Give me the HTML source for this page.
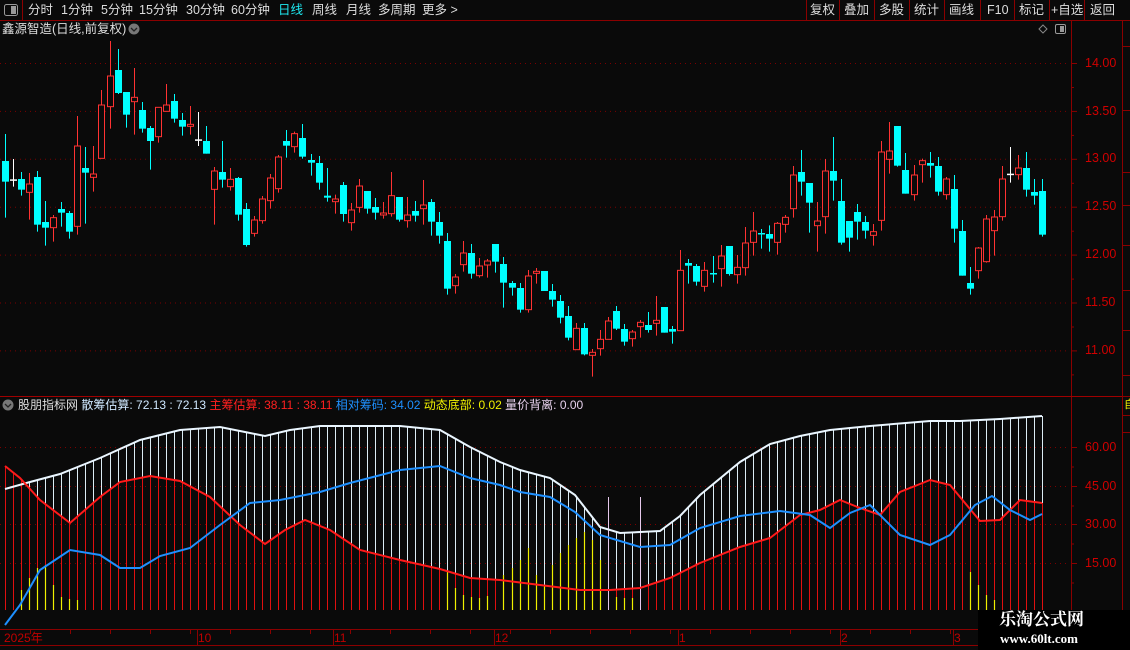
<!DOCTYPE html>
<html><head><meta charset="utf-8"><style>
html,body{margin:0;padding:0;background:#0a0a0a;width:1130px;height:650px;overflow:hidden;font-family:"Liberation Sans","Noto Sans CJK SC",sans-serif;}
#root{position:relative;width:1130px;height:650px;}
.t{position:absolute;white-space:nowrap;font-size:12.5px;line-height:14px;}
</style></head><body><div id="root">
<svg id="s" width="1130" height="650" style="position:absolute;left:0;top:0" xmlns="http://www.w3.org/2000/svg"></svg>
<div class="t" style="left:28px;top:3px;color:#ddd">分时</div>
<div class="t" style="left:61px;top:3px;color:#ddd">1分钟</div>
<div class="t" style="left:101px;top:3px;color:#ddd">5分钟</div>
<div class="t" style="left:139px;top:3px;color:#ddd">15分钟</div>
<div class="t" style="left:186px;top:3px;color:#ddd">30分钟</div>
<div class="t" style="left:231px;top:3px;color:#ddd">60分钟</div>
<div class="t" style="left:278px;top:3px;color:#1ee8f0">日线</div>
<div class="t" style="left:312px;top:3px;color:#ddd">周线</div>
<div class="t" style="left:346px;top:3px;color:#ddd">月线</div>
<div class="t" style="left:378px;top:3px;color:#ddd">多周期</div>
<div class="t" style="left:422px;top:3px;color:#ddd">更多 &gt;</div>
<div class="t" style="left:810px;top:3px;color:#ddd">复权</div>
<div class="t" style="left:844px;top:3px;color:#ddd">叠加</div>
<div class="t" style="left:879px;top:3px;color:#ddd">多股</div>
<div class="t" style="left:914px;top:3px;color:#ddd">统计</div>
<div class="t" style="left:949px;top:3px;color:#ddd">画线</div>
<div class="t" style="left:987px;top:3px;color:#ddd">F10</div>
<div class="t" style="left:1019px;top:3px;color:#ddd">标记</div>
<div class="t" style="left:1051px;top:3px;color:#ddd">+自选</div>
<div class="t" style="left:1090px;top:3px;color:#ddd">返回</div>
<div class="t" style="left:2px;top:22px;color:#ddd">鑫源智造(日线,前复权)</div>
<div class="t" style="left:18px;top:398px;font-size:12px">
<span style="color:#ddd">股朋指标网</span>
<span style="color:#cfe8ff">散筹估算: 72.13 : 72.13</span>
<span style="color:#ff2020">主筹估算: 38.11 : 38.11</span>
<span style="color:#1e90ff">相对筹码: 34.02</span>
<span style="color:#f0f000">动态底部: 0.02</span>
<span style="color:#e6d0ec">量价背离: 0.00</span></div>
<div class="t" style="left:1085px;top:56px;color:#d00000">14.00</div>
<div class="t" style="left:1085px;top:104px;color:#d00000">13.50</div>
<div class="t" style="left:1085px;top:151px;color:#d00000">13.00</div>
<div class="t" style="left:1085px;top:199px;color:#d00000">12.50</div>
<div class="t" style="left:1085px;top:247px;color:#d00000">12.00</div>
<div class="t" style="left:1085px;top:295px;color:#d00000">11.50</div>
<div class="t" style="left:1085px;top:343px;color:#d00000">11.00</div>
<div class="t" style="left:1085px;top:440px;color:#d00000">60.00</div>
<div class="t" style="left:1085px;top:479px;color:#d00000">45.00</div>
<div class="t" style="left:1085px;top:517px;color:#d00000">30.00</div>
<div class="t" style="left:1085px;top:556px;color:#d00000">15.00</div>
<div class="t" style="left:4px;top:631px;color:#c00000;font-size:12px">2025年</div>
<div class="t" style="left:198px;top:631px;color:#c00000;font-size:12px">10</div>
<div class="t" style="left:334px;top:631px;color:#c00000;font-size:12px">11</div>
<div class="t" style="left:495px;top:631px;color:#c00000;font-size:12px">12</div>
<div class="t" style="left:679px;top:631px;color:#c00000;font-size:12px">1</div>
<div class="t" style="left:841px;top:631px;color:#c00000;font-size:12px">2</div>
<div class="t" style="left:954px;top:631px;color:#c00000;font-size:12px">3</div>
<div style="position:absolute;left:978px;top:610px;width:152px;height:40px;background:#000"></div>
<div class="t" style="left:999px;top:610px;color:#fff;font-size:17px;line-height:20px;font-weight:bold;font-family:'Liberation Serif','Noto Serif CJK SC',serif">乐淘公式网</div>
<div class="t" style="left:1000px;top:632px;color:#fff;font-size:13px;font-weight:bold;font-family:'Liberation Serif',serif">www.60lt.com</div>
<div class="t" style="left:1124px;top:398px;color:#f0f000;font-size:11px">自</div>
</div>
<script>
var s=document.getElementById('s'),h='';
function R(x,y,w,hh,f){h+='<rect x="'+x+'" y="'+y+'" width="'+w+'" height="'+hh+'" fill="'+f+'"/>';}
function L(x1,y1,x2,y2,c,w,d){h+='<line x1="'+x1+'" y1="'+y1+'" x2="'+x2+'" y2="'+y2+'" stroke="'+c+'" stroke-width="'+(w||1)+'"'+(d?' stroke-dasharray="'+d+'"':'')+'/>';}
var B='#8b0000';
L(0,20.5,1130,20.5,B);L(22.5,0,22.5,20,B);
h+='<rect x="4.5" y="4.5" width="13" height="11" rx="2" fill="none" stroke="#999"/>';R(11,6,5,8,'#999');
[806,839,874,909,944,980,1014,1049,1084].forEach(function(x){L(x+.5,0,x+.5,20,B);});
L(1071.5,20,1071.5,630,B);L(1122.5,20,1122.5,630,B);
L(0,396.5,1122,396.5,'#a00000');L(0,629.5,1130,629.5,B);L(0,645.5,1130,645.5,B);
[20,46,110,172,205,245,290,330,375,396,415,432,628].forEach(function(y){L(1122,y+.5,1130,y+.5,B);});
h+='<circle cx="134" cy="29" r="5.5" fill="#777"/><path d="M131 28 l3 3 l3 -3" stroke="#222" fill="none" stroke-width="1.3"/>';
h+='<path d="M1043 25 l4 4 l-4 4 l-4 -4z" fill="none" stroke="#888"/>';
h+='<rect x="1055.5" y="24.5" width="10" height="9" rx="1.5" fill="none" stroke="#999"/>';R(1060,26,4,6,'#999');
h+='<circle cx="8" cy="405" r="5.5" fill="#777"/><path d="M5 404 l3 3 l3 -3" stroke="#222" fill="none" stroke-width="1.3"/>';
for(var p=0;p<7;p++){var y=63.5+p*47.9;L(0,y,1066,y,'#7a0000',1,'1 4');L(1071,y,1077,y,B);L(1071,y+24,1074,y+24,B);}
[447,486,524,563].forEach(function(y){L(0,y+.5,1066,y+.5,'#7a0000',1,'1 4');L(1071,y+.5,1077,y+.5,B);L(1071,y+20,1074,y+20,B);});
[197,333,494,678,840,953].forEach(function(x){L(x+.5,630,x+.5,645,B);});
for(var x=30;x<1066;x+=40)L(x+.5,630,x+.5,634,B);
var D=[
['c',363,425,282,533],['w',418,418,357,440],['c',417,449,396,467],['r',432,457,399,539],['c',411,554,393,575],['c',546,563,483,617],['r',533,563,525,605],['c',507,518,486,560],['c',519,575,513,596],['r',318,559,228,584],
['c',384,398,321,551],['r',402,412,318,455],['r',195,355,150,355],['r',108,200,3,266],['c',90,159,27,162],['c',156,224,156,263],['r',172,185,84,284],['c',210,266,186,278],['c',264,303,258,389],['r',202,290,202,308],
['r',195,214,132,214],['c',183,236,162,248],['c',240,260,219,287],['r',253,257,198,284],['w',298,302,216,318],['c',303,341,258,341],['r',393,448,381,554],['c',396,419,303,443],['r',418,440,384,452],['c',414,524,411,542],
['c',507,615,489,620],['r',540,580,528,590],['r',477,542,468,551],['r',414,482,402,506],['r',351,446,345,458],['c',303,317,270,353],['r',281,320,275,338],['c',294,350,252,356],['c',360,368,342,407],['c',369,428,348,449],
['c',467,473,384,485],['r',477,485,464,521],['c',435,522,426,545],['r',510,548,489,572],['r',438,502,417,518],['c',453,506,453,521],['c',501,518,474,539],['r',519,524,486,536],['r',467,521,396,530],['c',471,539,471,545],
['r',525,542,471,563],['c',513,527,483,545],['r',495,506,420,554],['c',486,545,477,587],['c',546,587,516,611],['c',603,746,579,764],['r',711,737,702,761],['r',639,674,603,695],['c',639,701,612,716],['r',678,707,654,713],
['r',663,675,657,713],['c',612,665,612,698],['c',672,728,651,803],['c',729,743,723,767],['c',744,809,729,818],['r',498,599,480,608],
['r',484,490,474,521],['c',483,543,483,543],['c',543,569,522,590],['c',573,623,555,640],['c',618,683,588,691],['r',655,719,639,719],['c',654,733,639,736],['r',727,736,717,800],['r',688,716,660,737],['r',633,688,621,688],
['c',603,656,588,660],['c',657,695,642,707],['r',666,686,660,710],['r',637,650,630,683],['c',645,660,606,668],['r',631,640,558,677],['c',591,668,591,668],['c',657,665,648,701],['r',481,662,420,662],['c',459,467,447,521],
['c',468,515,462,527],['r',481,529,456,545],['c',489,491,438,518],['r',438,476,405,530],['c',408,492,408,497],['r',472,494,435,521],['r',399,473,351,497],['r',363,397,306,437],['c',369,371,357,416],['c',372,386,346,425],
['r',340,397,336,434],['r',322,343,315,368],['r',195,296,168,323],['c',186,215,120,257],['c',219,278,219,368],['r',333,347,276,425],['r',183,320,147,371],['c',183,212,81,272],['c',273,398,207,404],['c',333,383,333,425],
['c',306,335,282,389],['c',336,362,318,386],['r',365,376,342,407],['r',126,331,93,362],['r',123,148,36,191],['c',48,167,48,170],['c',180,251,129,251],['r',195,254,165,272],['r',152,164,146,218],['c',159,167,126,203],
['c',168,245,141,257],['r',207,254,201,269],['c',237,356,195,398],['c',363,497,330,497],['c',519,536,471,554],['r',414,482,411,506],['r',327,455,315,458],['r',321,362,300,437],['r',207,320,168,332],['w',191,193,111,218],
['r',174,194,135,209],['c',174,239,126,260],['c',246,257,207,284],['c',243,374,207,380]];
D.forEach(function(d,i){var off=i<65?40:110;var x=Math.round(5+i*8.04);
var bt=off+d[1]/3,bb=off+d[2]/3,wt=off+d[3]/3,wb=off+d[4]/3;
var col=d[0]=='c'?'#00ffff':d[0]=='r'?'#ff3232':'#ffffff';
L(x+.5,wt,x+.5,wb,col);
if(d[0]=='r'){var hh=Math.max(bb-bt,2);R(x-3,bt,7,hh,'#0a0a0a');h+='<rect x="'+(x-2.5)+'" y="'+bt+'" width="6" height="'+hh+'" fill="none" stroke="'+col+'"/>';}
else R(x-3,bt,7,Math.max(bb-bt,1.5),col);});
function mk(a){return function(x){for(var k=0;k+2<a.length;k+=2){if(x<=a[k+2]){var t=(x-a[k])/(a[k+2]-a[k]);t=Math.max(0,Math.min(1,t));return a[k+1]+(a[k+3]-a[k+1])*t;}}return a[a.length-1];};}
function pts(a){var o=[];for(var k=0;k<a.length;k+=2)o.push(a[k]+','+a[k+1]);return o.join(' ');}
var W=[5,489,30,482,60,474,100,458,140,440,180,430,220,427,245,432,265,436,290,430,320,426,400,426,440,430,470,447,500,462,520,470,550,478,575,495,600,527,620,533,660,531,680,516,700,495,740,462,770,444,800,436,830,430,870,426,930,421,960,421,1000,419,1042,416];
var Rc=[5,466,20,478,40,500,70,523,100,497,120,482,150,476,180,481,210,497,240,525,265,544,285,530,305,520,330,530,360,550,400,560,440,569,470,578,500,580,540,585,580,590,610,590,640,588,670,578,700,563,740,547,770,538,800,515,820,510,840,500,860,508,880,515,900,492,930,480,950,485,980,521,1000,520,1020,500,1042,503];
var Bc=[5,625,20,605,40,570,70,550,100,555,120,568,140,568,160,556,190,548,220,525,250,503,280,500,320,492,350,483,400,470,440,466,470,478,500,485,520,492,550,497,575,512,600,535,640,547,670,545,700,528,740,516,780,511,810,515,830,528,850,513,870,505,900,535,930,545,950,535,975,505,992,496,1010,510,1030,520,1042,514];
var fw=mk(W),fr=mk(Rc),base=610;
for(var i=0;i<130;i++){var x=Math.round(5+i*8.04)+.5;L(x,base,x,fw(x),'#dcecf4');L(x,base,x,fr(x),'#e01010');}
var Y=[[22,590],[30,578],[38,568],[46,565],[54,585],[62,597],[70,599],[78,600],[447,572],[455,588],[463,595],[471,597],[479,598],[487,596],[503,575],[511,568],[519,560],[527,548],[535,575],[543,585],[551,565],[559,553],[567,545],[575,538],[583,532],[591,540],[599,560],[615,597],[623,598],[631,598],[966,572],[974,585],[982,595],[990,600]];
Y.forEach(function(p){var i=Math.round((p[0]-5)/8.04);var x=Math.round(5+i*8.04)+.5;L(x,base,x,p[1],'#f0f000',1.2);});
[607,638].forEach(function(px){var i=Math.round((px-5)/8.04);var x=Math.round(5+i*8.04)+.5;L(x,base,x,497,'#e6c8ec');});
h+='<polyline points="'+pts(W)+'" fill="none" stroke="#eaf6ff" stroke-width="2"/>';
h+='<polyline points="'+pts(Rc)+'" fill="none" stroke="#ff1a1a" stroke-width="2"/>';
h+='<polyline points="'+pts(Bc)+'" fill="none" stroke="#1e90ff" stroke-width="2"/>';
s.innerHTML=h;
</script>
</body></html>
